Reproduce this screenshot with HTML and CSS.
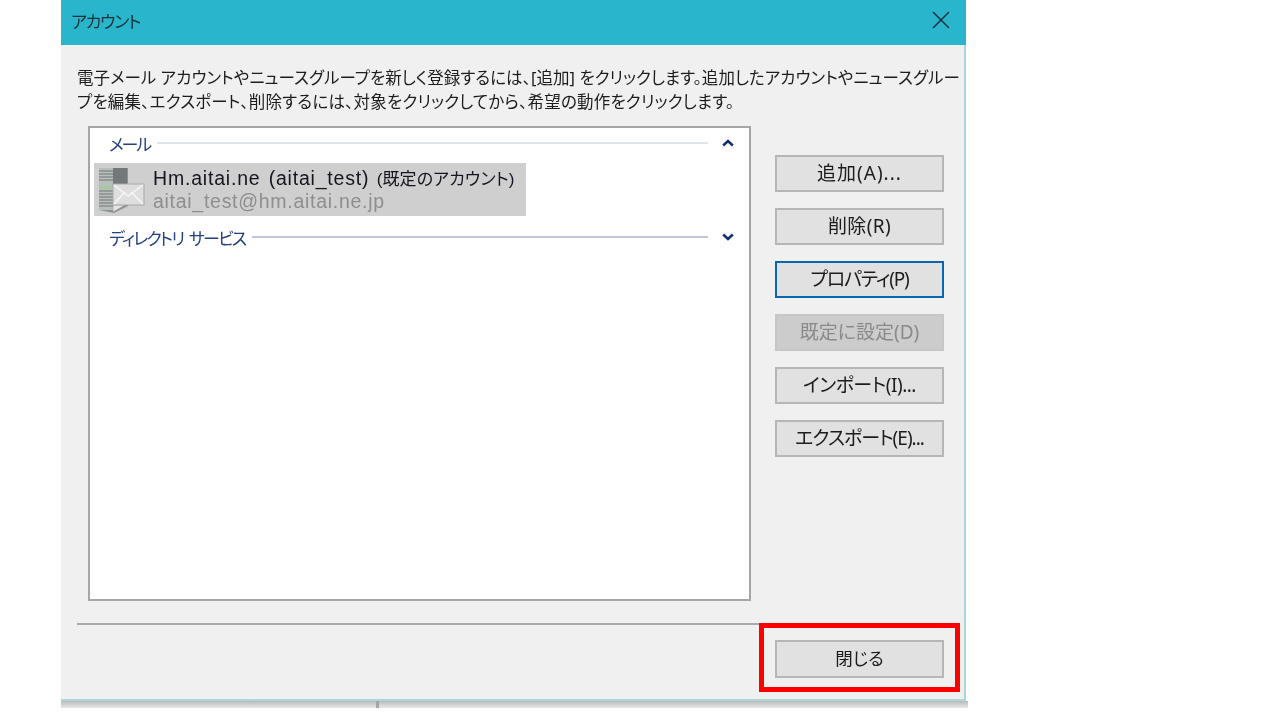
FILE: index.html
```html
<!DOCTYPE html>
<html lang="ja">
<head>
<meta charset="utf-8">
<title>アカウント</title>
<link rel="stylesheet" href="styles.css">
</head>
<body>
<div class="stage">
  <div class="dialog">
    <header class="titlebar">
      <span class="title">アカウント</span>
      <svg class="close-x" width="18" height="18" viewBox="0 0 18 18"><path d="M1 1 17 17M17 1 1 17" stroke="#14303a" stroke-width="1.500" fill="none"/></svg>
    </header>
    <div class="body">
      <p class="intro"><span class="line line-a">電子メール アカウントやニュースグループを新しく登録するには、[追加] をクリックします。追加したアカウントやニュースグルー</span><span class="line line-b">プを編集、エクスポート、削除するには、対象をクリックしてから、希望の動作をクリックします。</span></p>
      <div class="main">
        <div class="list">
          <div class="group group-mail">
            <span class="group-name">メール</span>
            <span class="group-rule"></span>
            <svg class="chev" width="12" height="8" viewBox="0 0 12 8"><path d="M1.200 6.500 6 2l4.800 4.500" stroke="#0f2f72" stroke-width="2.500" fill="none"/></svg>
          </div>
          <div class="account">
            <svg class="acct-icon" width="48" height="53" viewBox="0 0 48 53">
              <path d="M0 5h29v38l-14 7-15-3z" fill="#8d9392"/>
              <path d="M0 5h14v42H0z" fill="#b9bebd"/>
              <path d="M0 8h14M0 11h14M0 14h14M0 17h14M0 28h14M0 31h14M0 34h14M0 37h14M0 40h14M0 43h14" stroke="#6f7675" stroke-width="1.200"/>
              <path d="M14 5h14v17H14z" fill="#737978"/>
              <path d="M0 23h14v3H0z" fill="#a6c8a0"/>
              <path d="M14 49l12-7-12 0z" fill="#e6e6e6" stroke="#9a9a9a" stroke-width=".6"/>
              <rect x="14" y="21" width="31" height="21" fill="#dedede" stroke="#a9a9a9"/>
              <path d="M15 22l14 11 15-11M15 41l11-12M44 41 32 29" stroke="#f6f6f6" stroke-width="1.500" fill="none"/>
            </svg>
            <div class="acct-text">
              <div class="acct-name"><span class="acct-latin">Hm.aitai.ne (aitai_test)</span> <span class="acct-cjk">(既定のアカウント)</span></div>
              <div class="acct-mail">aitai_test@hm.aitai.ne.jp</div>
            </div>
          </div>
          <div class="group group-dir">
            <span class="group-name group-name-long">ディレクトリ サービス</span>
            <span class="group-rule rule-dark"></span>
            <svg class="chev" width="12" height="8" viewBox="0 0 12 8"><path d="M1.200 1.500 6 6l4.800-4.500" stroke="#0f2f72" stroke-width="2.500" fill="none"/></svg>
          </div>
        </div>
        <div class="actions">
          <button class="btn btn-add">追加(A)...</button>
          <button class="btn btn-del">削除(R)</button>
          <button class="btn btn-focus">プロパティ(P)</button>
          <button class="btn btn-off">既定に設定(D)</button>
          <button class="btn btn-import">インポート(I)...</button>
          <button class="btn btn-export">エクスポート(E)...</button>
        </div>
      </div>
      <div class="divider"></div>
      <div class="footer">
        <button class="btn btn-close">閉じる</button>
        <span class="highlight"></span>
      </div>
    </div>
  </div>
  <div class="shadow"><span class="tick"></span></div>
</div>
</body>
</html>
```
FILE: styles.css
```css
* { box-sizing: border-box; }
html, body { margin: 0; height: 100%; background: #fff; overflow: hidden; }
body { font-family: "Noto Sans", "Noto Sans CJK JP", sans-serif; font-feature-settings: "palt"; color: #1c1c1c; }
.stage { width: 907px; margin-left: 61px; filter: blur(.35px); }
.dialog { width: 905px; height: 701px; background: #f0f0f0; border-right: 2px solid #a9d7dd; border-bottom: 2px solid #a8d8de; display: flex; flex-direction: column; }
.titlebar { height: 45px; flex: none; background: #29b6cc; display: flex; align-items: center; justify-content: space-between; padding: 0 16px 5px 10px; margin-right: -2px; }
.title { font-size: 17px; letter-spacing: -1.200px; color: #16333a; }
.close-x { display: block; }
.body { flex: 1; display: flex; flex-direction: column; padding: 0 0 0 16px; }
.intro { margin: 21px 0 0; font-size: 16.500px; line-height: 24px; height: 48px; width: 888px; }
.line { display: block; white-space: nowrap; }
.line-a { letter-spacing: .05px; }
.line-b { letter-spacing: .2px; }
.main { display: flex; margin: 12px 0 0 11px; height: 475px; }
.list { width: 663px; height: 475px; background: #fff; border: 2px solid #a6a6a6; padding-top: 3px; display: flex; flex-direction: column; }
.group { display: flex; align-items: center; padding: 0 15px 0 19px; color: #24417f; font-size: 17px; height: 24px; }
.group-dir { margin-top: 9px; }
.group-name { flex: none; letter-spacing: -2.200px; }
.group-name-long { letter-spacing: -1.800px; word-spacing: 3px; }
.group-rule { flex: 1; height: 2px; background: #dfe3ec; margin: 0 14px 0 7px; }
.rule-dark { background: #c3c7da; }
.chev { flex: none; }
.account { margin: 8px 0 0 4px; width: 432px; height: 53px; background: #cfcfcf; display: flex; align-items: center; padding-left: 5px; }
.acct-icon { flex: none; }
.acct-text { margin-left: 6px; font-family: "Liberation Sans", "Noto Sans CJK JP", sans-serif; }
.acct-name { font-size: 19.500px; line-height: 24px; height: 24px; color: #15151f; white-space: nowrap; word-spacing: 2px; }
.acct-latin { letter-spacing: .8px; }
.acct-cjk { font-size: 17px; letter-spacing: .1px; }
.acct-mail { font-size: 19.500px; line-height: 23px; letter-spacing: .72px; color: #8e8e8e; white-space: nowrap; }
.actions { margin-left: 24px; padding-top: 29px; display: flex; flex-direction: column; gap: 16px; }
.btn { width: 169px; height: 37px; background: #e1e1e1; border: 2px solid #b6b6b6; padding: 0 0 3px; font: inherit; font-size: 19px; color: #1c1c1c; font-feature-settings: "palt"; }
.btn-add { letter-spacing: 1px; }
.btn-del { letter-spacing: .4px; }
.btn-focus { letter-spacing: -1.200px; border-color: #0a66ad; }
.btn-import { letter-spacing: -.5px; }
.btn-export { letter-spacing: -1px; }
.btn-off { background: #cccccc; border-color: #c6c6c6; color: #8a8a8a; }
.btn-close { height: 38px; font-size: 17.500px; }
.divider { height: 2px; margin-top: 22px; width: 869px; background: linear-gradient(90deg, #a9a9a9 0, #a9a9a9 94%, #f0f0f0 100%); }
.footer { position: relative; flex: 1; display: flex; justify-content: flex-end; padding: 15px 20px 0 0; }
.highlight { position: absolute; left: 682px; top: -2px; width: 201px; height: 69px; border: 5px solid #ff0000; }
.shadow { position: relative; width: 907px; height: 7px; background: linear-gradient(#b9b9b9, #e8e8e8); }
.tick { position: absolute; left: 315px; top: 0; width: 3px; height: 7px; background: #a5a5a5; }
```
